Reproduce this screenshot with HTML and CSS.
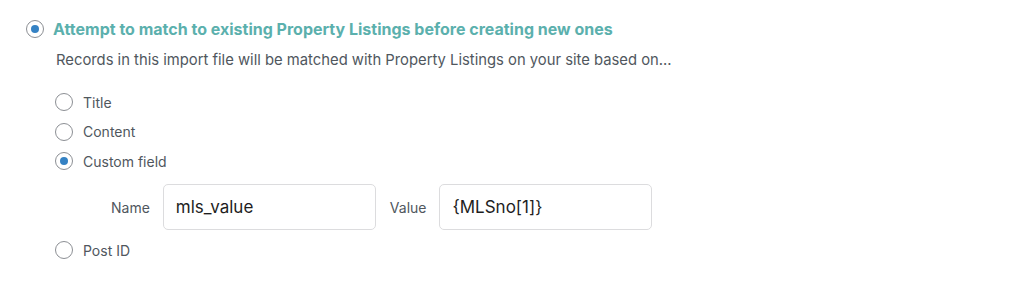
FILE: index.html
```html
<!DOCTYPE html>
<html lang="en">

<head>
    <meta charset="UTF-8">
    <meta name="viewport" content="width=device-width, initial-scale=1.0">
    <title>Import - Record Matching</title>
    <link rel="stylesheet" href="styles.css">
</head>

<body>
    <div class="matching">
        <label class="main-option">
            <input type="radio" name="mode" checked>
            <span>Attempt to match to existing Property Listings before creating new ones</span>
        </label>
        <p class="note">Records in this import file will be matched with Property Listings on your site based on...</p>

        <div class="options">
            <label class="option">
                <input type="radio" name="match">
                <span>Title</span>
            </label>
            <label class="option">
                <input type="radio" name="match">
                <span>Content</span>
            </label>
            <label class="option">
                <input type="radio" name="match" checked>
                <span>Custom field</span>
            </label>
            <div class="custom-field">
                <label for="cfName">Name</label>
                <input type="text" id="cfName" value="mls_value">
                <label for="cfValue">Value</label>
                <input type="text" id="cfValue" value="{MLSno[1]}">
            </div>
            <label class="option">
                <input type="radio" name="match">
                <span>Post ID</span>
            </label>
        </div>
    </div>
</body>

</html>
```

FILE: styles.css
```css
body {
    margin: 0;
    padding: 0;
    background: #fff;
    font-family: Inter, "Liberation Sans", sans-serif;
    color: #50575e;
}

.matching {
    padding: 20px 0 0 26px;
}

input[type="radio"] {
    appearance: none;
    -webkit-appearance: none;
    width: 18px;
    height: 18px;
    margin: 0;
    border: 1px solid #8c8f94;
    border-radius: 50%;
    background: #fff;
    display: inline-flex;
    justify-content: center;
    align-items: center;
    flex-shrink: 0;
    box-sizing: border-box;
}

input[type="radio"]:checked::before {
    content: "";
    width: 8px;
    height: 8px;
    border-radius: 50%;
    background: #3582c4;
}

.main-option {
    display: flex;
    align-items: center;
    gap: 9px;
    height: 18px;
}

.main-option span {
    font-size: 16px;
    font-weight: 700;
    color: #5bb0ad;
}

.note {
    margin: 13px 0 0 30px;
    font-size: 14.8px;
    line-height: 18px;
}

.options {
    margin: 24px 0 0 29px;
    display: flex;
    flex-direction: column;
}

.option {
    display: flex;
    align-items: center;
    gap: 10px;
    height: 18px;
    margin-bottom: 11.5px;
    font-size: 14px;
}

.custom-field {
    display: flex;
    align-items: center;
    margin: 2.5px 0 11px 56px;
    font-size: 14px;
}

.custom-field label {
    margin-right: 13px;
}

.custom-field input {
    width: 213px;
    height: 46px;
    box-sizing: border-box;
    border: 1px solid #dcdcde;
    border-radius: 5px;
    padding: 0 12px;
    font-family: inherit;
    font-size: 17px;
    color: #1e1e1e;
    margin-right: 14px;
}
```
